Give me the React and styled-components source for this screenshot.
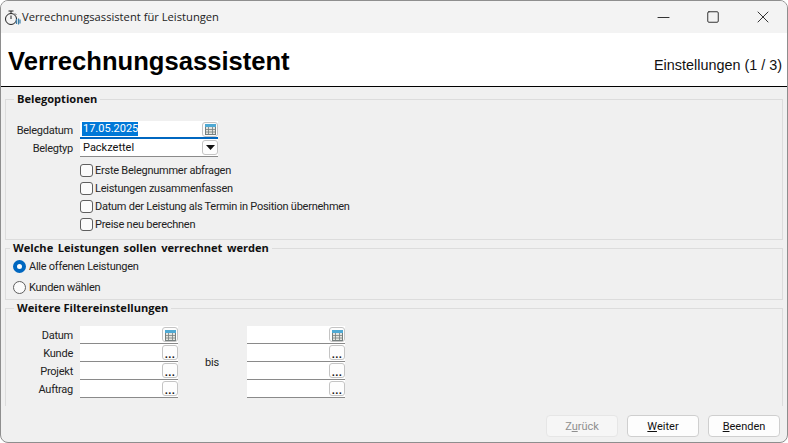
import React from 'react'
import styled, { createGlobalStyle } from 'styled-components'
import { Minus, Square, X } from 'lucide-react'

const Global = createGlobalStyle`
  html, body { margin: 0; padding: 0; background: #fff; }
  body { font-family: Roboto, "Liberation Sans", sans-serif; font-size: 11px; letter-spacing: -0.25px; color: #111; }
`

const Win = styled.div`
  box-sizing: border-box;
  width: 788px;
  height: 443px;
  display: flex;
  flex-direction: column;
  border: 1px solid #8e8e8e;
  border-radius: 8px;
  overflow: hidden;
  background: #f0f0f0;
`

const TitleBar = styled.div`
  height: 32px;
  flex: none;
  display: flex;
  align-items: center;
  padding-left: 3px;
  background: #f3f3f3;
  color: #222;
`

const TitleText = styled.span`
  margin-bottom: 2px;
  font-family: "Open Sans", sans-serif;
  font-size: 11.2px;
  letter-spacing: 0;
`

const AppIcon = styled.svg`
  width: 17px;
  height: 17px;
  margin-right: 1px;
  flex: none;
`

const Controls = styled.div`
  margin: 0 -1px 0 auto;
  display: flex;
  height: 100%;
`

const Ctrl = styled.div`
  width: 50px;
  height: 100%;
  display: flex;
  align-items: center;
  justify-content: center;
  color: #333;
`

const Banner = styled.div`
  height: 54px;
  flex: none;
  box-sizing: border-box;
  display: flex;
  align-items: center;
  justify-content: space-between;
  padding: 4px 5px 0 7px;
  background: #fff;
  border-bottom: 1px solid #000;
  letter-spacing: 0;
`

const BannerTitle = styled.h1`
  margin: 0;
  font: bold 25.6px "Liberation Sans", Arial, sans-serif;
  color: #000;
`

const Step = styled.span`
  margin-top: 7px;
  font: 14.4px "Liberation Sans", Arial, sans-serif;
  color: #111;
`

const Panel = styled.div`
  box-sizing: border-box;
  height: 319px;
  flex: none;
  overflow: hidden;
  padding: 5px 4px 0 4px;
`

const Group = styled.fieldset`
  box-sizing: border-box;
  margin: 0 0 ${p => p.$gap || 0}px;
  padding: ${p => p.$top}px 0 0;
  height: ${p => p.$h}px;
  border: 1px solid #dcdcdc;
  min-width: 0;
`

const Legend = styled.legend`
  margin-left: ${p => p.$indent}px;
  padding: 0 3px;
  font-family: "Open Sans", sans-serif;
  font-weight: 700;
  font-size: 11.1px;
  line-height: 14px;
  letter-spacing: 0;
  word-spacing: ${p => p.$words || 0}px;
  color: #111;
`

const FormRow = styled.div`
  display: flex;
  align-items: center;
  height: 18px;
`

const Label = styled.label`
  width: 67px;
  margin-right: 7px;
  text-align: right;
  flex: none;
  color: #222;
`

const Field = styled.div`
  box-sizing: border-box;
  width: ${p => p.$w}px;
  height: 18px;
  display: flex;
  align-items: center;
  justify-content: space-between;
  padding: 0 0 0 3px;
  background: #fff;
  letter-spacing: 0;
  border-bottom: ${p => (p.$active ? '2px solid #0067c0' : '1px solid #8a8a8a')};
`

const Selected = styled.span`
  background: #0078d7;
  color: #fff;
  margin-left: -1px;
  padding: 0 0 0 1px;
  line-height: 14px;
`

const FieldBtn = styled.div`
  box-sizing: border-box;
  width: 16px;
  height: 15px;
  display: flex;
  align-items: center;
  justify-content: center;
  border: 1px solid #c4c4c4;
  border-radius: 3px;
  background: #fdfdfd;
  font-weight: 700;
  font-size: 11px;
  line-height: 1;
  color: #111;
`

const Dots = styled.span`
  margin-top: 3px;
  letter-spacing: 0.3px;
`

const Checks = styled.div`
  display: flex;
  flex-direction: column;
  margin: 4px 0 0 74px;
`

const CheckRow = styled.label`
  display: flex;
  align-items: center;
  gap: 2px;
  height: 18px;
  color: #222;
`

const Box = styled.span`
  box-sizing: border-box;
  width: 13px;
  height: 13px;
  border: 1px solid #5f5f5f;
  border-radius: 3px;
  background: #fbfbfb;
  flex: none;
`

const RadioRow = styled.label`
  display: flex;
  align-items: center;
  gap: 3px;
  height: 21px;
  margin-left: 7px;
  color: #222;
`

const Radio = styled.span`
  box-sizing: border-box;
  width: 13px;
  height: 13px;
  border-radius: 50%;
  flex: none;
  background: ${p => (p.$on ? '#fff' : '#fbfbfb')};
  border: ${p => (p.$on ? '4px solid #0067c0' : '1px solid #5f5f5f')};
`

const FilterGrid = styled.div`
  display: grid;
  grid-template-columns: 74px 98px 69px 98px;
  grid-auto-rows: 18px;
  align-items: center;
`

const FilterLabel = styled.label`
  text-align: right;
  margin-right: 7px;
  color: #222;
`

const Bis = styled.span`
  grid-column: 3;
  grid-row: 1 / span 4;
  justify-self: center;
  margin: 1px 1px 0 0;
  color: #222;
`

const Footer = styled.div`
  flex: 1;
  display: flex;
  justify-content: flex-end;
  align-items: flex-start;
  gap: 9px;
  padding: 9px 7px 0 0;
`

const Button = styled.button`
  box-sizing: border-box;
  width: 72px;
  height: 22px;
  padding: 0;
  border: 1px solid ${p => (p.disabled ? '#e6e6e6' : '#cfcfcf')};
  border-radius: 4px;
  background: ${p => (p.disabled ? '#f6f6f6' : '#fdfdfd')};
  color: ${p => (p.disabled ? '#8f8f8f' : '#111')};
  font: inherit;
  letter-spacing: 0;
  u { text-underline-offset: 1px; }
`

const Stopwatch = () => (
  <AppIcon viewBox="0 0 17 17" fill="none">
    <circle cx="7" cy="10" r="5.5" stroke="#222" strokeWidth="1" />
    <path d="M4.5 2h5M7 2v2.5M7 10V6.5M11 4.5l1.2 1.2" stroke="#222" strokeWidth="1" />
    <path d="M12.5 10v5M14.5 9.5v6M16 10.5v4" stroke="#3f7fa8" strokeWidth="1.2" />
  </AppIcon>
)

const Calendar = () => (
  <FieldBtn>
    <svg width="11" height="12" viewBox="0 0 11 12" fill="none">
      <rect x="0.5" y="2" width="10" height="9.5" fill="#e4e4e0" stroke="#77807f" />
      <rect x="0" y="1" width="11" height="3" fill="#4fa9d3" />
      <path d="M0 6.5h11M0 9h11M3.5 4v7.5M7.5 4v7.5" stroke="#77807f" strokeWidth="0.8" />
    </svg>
  </FieldBtn>
)

const More = () => (
  <FieldBtn>
    <Dots>...</Dots>
  </FieldBtn>
)

const ComboArrow = () => (
  <FieldBtn>
    <svg width="9" height="5" viewBox="0 0 9 5">
      <path d="M0 0h9L4.5 5z" fill="#111" />
    </svg>
  </FieldBtn>
)

const options = [
  'Erste Belegnummer abfragen',
  'Leistungen zusammenfassen',
  'Datum der Leistung als Termin in Position übernehmen',
  'Preise neu berechnen',
]

const filters = [
  { label: 'Datum', button: <Calendar /> },
  { label: 'Kunde', button: <More /> },
  { label: 'Projekt', button: <More /> },
  { label: 'Auftrag', button: <More /> },
]

export default function App() {
  return (
    <>
      <Global />
      <Win>
        <TitleBar>
          <Stopwatch />
          <TitleText>Verrechnungsassistent für Leistungen</TitleText>
          <Controls>
            <Ctrl><Minus size={19} strokeWidth={1.26} /></Ctrl>
            <Ctrl><Square size={14} strokeWidth={1.7} /></Ctrl>
            <Ctrl><X size={20} strokeWidth={1.2} /></Ctrl>
          </Controls>
        </TitleBar>

        <Banner>
          <BannerTitle>Verrechnungsassistent</BannerTitle>
          <Step>Einstellungen (1 / 3)</Step>
        </Banner>

        <Panel>
          <Group $h={148} $gap={1} $top={15}>
            <Legend $indent={8}>Belegoptionen</Legend>
            <FormRow>
              <Label>Belegdatum</Label>
              <Field $w={138} $active>
                <Selected>17.05.2025</Selected>
                <Calendar />
              </Field>
            </FormRow>
            <FormRow>
              <Label>Belegtyp</Label>
              <Field $w={138}>
                Packzettel
                <ComboArrow />
              </Field>
            </FormRow>
            <Checks>
              {options.map(o => (
                <CheckRow key={o}><Box />{o}</CheckRow>
              ))}
            </Checks>
          </Group>

          <Group $h={59} $gap={1} $top={1}>
            <Legend $indent={4} $words={1.7}>Welche Leistungen sollen verrechnet werden</Legend>
            <RadioRow><Radio $on />Alle offenen Leistungen</RadioRow>
            <RadioRow><Radio />Kunden wählen</RadioRow>
          </Group>

          <Group $h={120} $top={11}>
            <Legend $indent={8}>Weitere Filtereinstellungen</Legend>
            <FilterGrid>
              {filters.map((f, i) => (
                <React.Fragment key={f.label}>
                  <FilterLabel style={{ gridColumn: 1, gridRow: i + 1 }}>{f.label}</FilterLabel>
                  <Field $w={98} style={{ gridColumn: 2, gridRow: i + 1 }}>
                    <span />
                    {f.button}
                  </Field>
                  <Field $w={98} style={{ gridColumn: 4, gridRow: i + 1 }}>
                    <span />
                    {f.button}
                  </Field>
                </React.Fragment>
              ))}
              <Bis>bis</Bis>
            </FilterGrid>
          </Group>
        </Panel>

        <Footer>
          <Button disabled><span>Z<u>u</u>rück</span></Button>
          <Button><u>W</u>eiter</Button>
          <Button><u>B</u>eenden</Button>
        </Footer>
      </Win>
    </>
  )
}
